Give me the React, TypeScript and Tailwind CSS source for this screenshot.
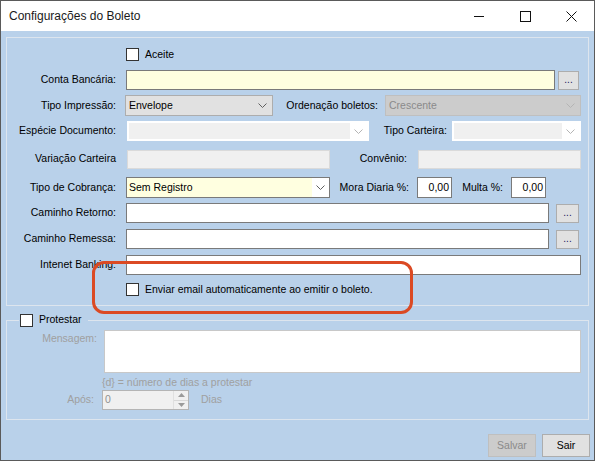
import type { ReactNode } from "react";

const Chevron = ({ color = "#606060" }: { color?: string }) => (
  <svg width="9" height="5" viewBox="0 0 9 5" fill="none">
    <path d="M0.5 0.5 L4.5 4.5 L8.5 0.5" stroke={color} strokeWidth="1" />
  </svg>
);

const Check = () => <span className="block w-[13px] h-[13px] border border-[#333333] bg-white shrink-0" />;

function Label({ w, children, gray = false }: { w: string; children: ReactNode; gray?: boolean }) {
  return (
    <span className={`${w} shrink-0 text-right whitespace-nowrap ${gray ? "text-[#a0a0a0]" : "text-black"}`}>
      {children}
    </span>
  );
}

function DotsButton({ cls }: { cls: string }) {
  return (
    <button className={`${cls} h-[19px] bg-[#e1e1e1] border border-[#adadad] text-[10px] leading-none flex items-end justify-center pb-[4px] text-[#1a1a5a]`}>
      ...
    </button>
  );
}

export default function App() {
  return (
    <div className="w-[595px] h-[461px] border border-[#5a5a5a] flex flex-col bg-white font-['Liberation_Sans',Arial,sans-serif] text-[10.5px] text-black">
      {/* barra de título */}
      <div className="h-[30px] flex items-center bg-white">
        <span className="pl-[8px] text-[12px] text-[#1a1a1a] flex-1">Configurações do Boleto</span>
        <div className="flex h-full">
          <div className="w-[46px] flex items-center justify-center">
            <svg width="11" height="11" viewBox="0 0 11 11">
              <path d="M0 5.5 H10" stroke="#111" strokeWidth="1" />
            </svg>
          </div>
          <div className="w-[46px] flex items-center justify-center">
            <svg width="11" height="11" viewBox="0 0 11 11">
              <rect x="0.5" y="0.5" width="10" height="10" fill="none" stroke="#111" strokeWidth="1" />
            </svg>
          </div>
          <div className="w-[46px] flex items-center justify-center">
            <svg width="11" height="11" viewBox="0 0 11 11">
              <path d="M0.5 0.5 L10.5 10.5 M10.5 0.5 L0.5 10.5" stroke="#111" strokeWidth="1" />
            </svg>
          </div>
        </div>
      </div>

      {/* corpo */}
      <div className="flex-1 bg-[#b9d1ea] relative flex flex-col pt-[6px] pl-[5px] pr-[4px]">
        {/* grupo principal */}
        <div className="w-[583px] h-[269px] border border-[#dde5ee] flex flex-col">
          <div className="flex items-center h-[13px] mt-[10px]">
            <span className="w-[119px]" />
            <Check />
            <span className="ml-[6px]">Aceite</span>
          </div>

          <div className="flex items-center h-[20px] mt-[9px]">
            <Label w="w-[109px]">Conta Bancária:</Label>
            <div className="ml-[10px] w-[429px] h-[20px] bg-[#ffffe0] border border-[#7a7a7a]" />
            <DotsButton cls="ml-[3px] w-[21px]" />
          </div>

          <div className="flex items-center h-[21px] mt-[5px]">
            <Label w="w-[109px]">Tipo Impressão:</Label>
            <div className="ml-[9px] w-[148px] h-[21px] bg-[#e1e1e1] border border-[#adadad] flex items-center pl-[3px] pr-[5px]">
              <span className="flex-1">Envelope</span>
              <Chevron />
            </div>
            <Label w="w-[105px]">Ordenação boletos:</Label>
            <div className="ml-[7px] w-[196px] h-[21px] bg-[#cccccc] border border-[#bfbfbf] flex items-center pl-[3px] pr-[5px] text-[#8a8a8a]">
              <span className="flex-1">Crescente</span>
              <Chevron color="#b4b4b4" />
            </div>
          </div>

          <div className="flex items-center h-[20px] mt-[5px]">
            <Label w="w-[109px]">Espécie Documento:</Label>
            <div className="ml-[11px] w-[242px] h-[20px] bg-white flex items-center p-[2px]">
              <div className="flex-1 h-full bg-[#f0f0f0]" />
              <div className="w-[17px] flex justify-center">
                <Chevron color="#b4b4b4" />
              </div>
            </div>
            <Label w="w-[78px]">Tipo Carteira:</Label>
            <div className="ml-[5px] w-[129px] h-[20px] bg-white flex items-center p-[2px]">
              <div className="flex-1 h-full bg-[#f0f0f0]" />
              <div className="w-[17px] flex justify-center">
                <Chevron color="#b4b4b4" />
              </div>
            </div>
          </div>

          <div className="flex items-center h-[20px] mt-[8px]">
            <Label w="w-[109px]">Variação Carteira</Label>
            <div className="ml-[11px] w-[203px] h-[19px] bg-[#f0f0f0] border border-[#dadada]" />
            <Label w="w-[77px]">Convênio:</Label>
            <div className="ml-[11px] w-[163px] h-[19px] bg-[#f0f0f0] border border-[#dadada]" />
          </div>

          <div className="flex items-center h-[21px] mt-[8px]">
            <Label w="w-[109px]">Tipo de Cobrança:</Label>
            <div className="ml-[10px] w-[204px] h-[21px] border border-[#7a7a7a] bg-white flex items-center">
              <div className="flex-1 h-full bg-[#ffffe0] flex items-center pl-[2px]">Sem Registro</div>
              <div className="w-[17px] flex justify-center">
                <Chevron />
              </div>
            </div>
            <Label w="w-[79px]">Mora Diaria %:</Label>
            <div className="ml-[8px] w-[35px] h-[21px] bg-white border border-[#7a7a7a] flex items-center justify-end pr-[2px]">0,00</div>
            <Label w="w-[51px]">Multa %:</Label>
            <div className="ml-[8px] w-[35px] h-[21px] bg-white border border-[#7a7a7a] flex items-center justify-end pr-[2px]">0,00</div>
          </div>

          <div className="flex items-center h-[20px] mt-[5px]">
            <Label w="w-[109px]">Caminho Retorno:</Label>
            <div className="ml-[10px] w-[423px] h-[20px] bg-white border border-[#7a7a7a]" />
            <DotsButton cls="ml-[7px] w-[23px]" />
          </div>

          <div className="flex items-center h-[20px] mt-[6px]">
            <Label w="w-[109px]">Caminho Remessa:</Label>
            <div className="ml-[10px] w-[423px] h-[20px] bg-white border border-[#7a7a7a]" />
            <DotsButton cls="ml-[7px] w-[23px]" />
          </div>

          <div className="flex items-center h-[20px] mt-[6px]">
            <Label w="w-[109px]">Intenet Banking:</Label>
            <div className="ml-[10px] w-[455px] h-[20px] bg-white border border-[#7a7a7a]" />
          </div>

          <div className="flex items-center h-[13px] mt-[8px]">
            <span className="w-[119px]" />
            <Check />
            <span className="ml-[6px]">Enviar email automaticamente ao emitir o boleto.</span>
          </div>
        </div>

        {/* grupo protestar */}
        <fieldset className="w-[583px] mt-[7px] border border-[#dde5ee] pb-[9px]">
          <legend className="ml-[12px] pl-[1px] pr-[6px] h-[14px] flex items-center">
            <Check />
            <span className="ml-[6px]">Protestar</span>
          </legend>
          <div className="flex items-start mt-[3px]">
            <Label w="w-[90px]" gray>
              <span className="block mt-[1px]">Mensagem:</span>
            </Label>
            <div className="ml-[7px] w-[477px] h-[43px] bg-white border border-[#c8c8c8]" />
          </div>
          <div className="mt-[2px] pl-[95px] h-[15px] flex items-center text-[#a0a0a0]">
            {"{d} = número de dias a protestar"}
          </div>
          <div className="flex items-center h-[20px]">
            <Label w="w-[87px]" gray>Após:</Label>
            <div className="ml-[8px] w-[87px] h-[20px] bg-[#f0f0f0] border border-[#b4b4b4] flex">
              <span className="flex-1 pl-[2px] flex items-center text-[#909090]">0</span>
              <div className="w-[15px] flex flex-col border-l border-[#e0e0e0]">
                <div className="flex-1 flex items-center justify-center border-b border-[#d8d8d8]">
                  <svg width="7" height="4" viewBox="0 0 7 4"><path d="M0 4 L3.5 0 L7 4 Z" fill="#9a9a9a" /></svg>
                </div>
                <div className="flex-1 flex items-center justify-center">
                  <svg width="7" height="4" viewBox="0 0 7 4"><path d="M0 0 L3.5 4 L7 0 Z" fill="#9a9a9a" /></svg>
                </div>
              </div>
            </div>
            <span className="ml-[12px] text-[#a0a0a0]">Dias</span>
          </div>
        </fieldset>

        {/* botões */}
        <div className="flex justify-end gap-[6px] mt-[14px]">
          <button className="w-[48px] h-[23px] bg-[#cccccc] border border-[#bfbfbf] text-[#8a8a8a]">Salvar</button>
          <button className="w-[48px] h-[23px] bg-[#e1e1e1] border border-[#adadad]">Sair</button>
        </div>

        {/* destaque em vermelho */}
        <div className="absolute left-[91px] top-[230px] w-[321px] h-[53px] rounded-[12px] border-[3px] border-[#db4a24] pointer-events-none" />
      </div>
    </div>
  );
}
